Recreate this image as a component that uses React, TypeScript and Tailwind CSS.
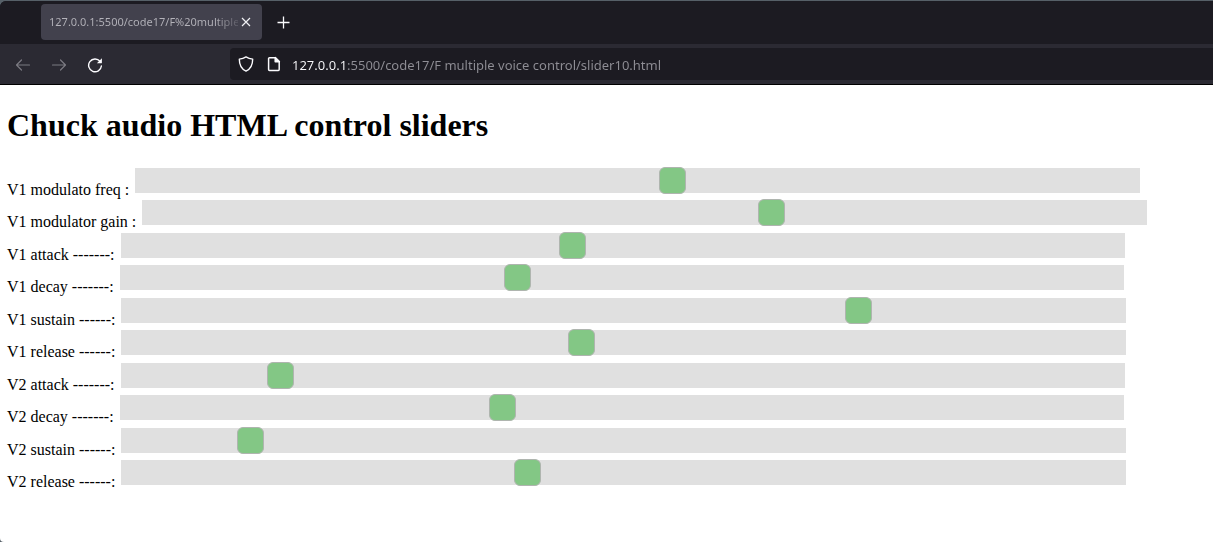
import { useState } from "react";

const sliders = [
  { id: "v1-mod-freq", label: "V1 modulato freq :", value: 536 },
  { id: "v1-mod-gain", label: "V1 modulator gain :", value: 630 },
  { id: "v1-attack", label: "V1 attack -------:", value: 449 },
  { id: "v1-decay", label: "V1 decay -------:", value: 393 },
  { id: "v1-sustain", label: "V1 sustain ------:", value: 740 },
  { id: "v1-release", label: "V1 release ------:", value: 457 },
  { id: "v2-attack", label: "V2 attack -------:", value: 150 },
  { id: "v2-decay", label: "V2 decay -------:", value: 378 },
  { id: "v2-sustain", label: "V2 sustain ------:", value: 118 },
  { id: "v2-release", label: "V2 release ------:", value: 402 },
];

function VoiceSlider({ id, label, initial }: { id: string; label: string; initial: number }) {
  const [value, setValue] = useState(initial);
  return (
    <div className="flex items-start gap-1.5 odd:h-8 even:h-[33px]">
      <label htmlFor={id} className="shrink-0 pt-3 text-base leading-5 text-black">
        {label}
      </label>
      <input
        id={id}
        type="range"
        min={0}
        max={1000}
        value={value}
        onChange={(e) => setValue(Number(e.target.value))}
        className="h-[25px] w-[84%] appearance-none bg-[#e0e0e0] outline-none [&::-webkit-slider-thumb]:h-[27px] [&::-webkit-slider-thumb]:w-[27px] [&::-webkit-slider-thumb]:cursor-pointer [&::-webkit-slider-thumb]:appearance-none [&::-webkit-slider-thumb]:rounded-md [&::-webkit-slider-thumb]:border [&::-webkit-slider-thumb]:border-solid [&::-webkit-slider-thumb]:border-[#afb5af] [&::-webkit-slider-thumb]:bg-[#83c785]"
      />
    </div>
  );
}

function TabStrip() {
  return (
    <div className="flex h-[43px] items-start bg-[#1c1b22] pt-[3px] pl-[41px]">
      <div className="flex h-9 w-[221px] items-center rounded bg-[#42414d] pr-2 pl-2">
        <span className="min-w-0 flex-1 bg-linear-to-r from-[#b4b3ba] from-88% to-[#5a5964] bg-clip-text text-[11px] leading-5 whitespace-nowrap text-transparent">
          127.0.0.1:5500/code17/F%20multiple
        </span>
        <button type="button" aria-label="Close tab" className="flex h-4 w-4 items-center justify-center">
          <svg width="10" height="10" viewBox="0 0 10 10" fill="none" stroke="#f0f0f4" strokeWidth="1.2">
            <path d="M1 1l8 8M9 1L1 9" />
          </svg>
        </button>
      </div>
      <button type="button" aria-label="New tab" className="ml-3 flex h-9 w-[19px] items-center justify-center">
        <svg width="13" height="13" viewBox="0 0 13 13" fill="none" stroke="#fbfbfe" strokeWidth="1.3">
          <path d="M6.5 .5v12M.5 6.5h12" />
        </svg>
      </button>
    </div>
  );
}

function Toolbar() {
  return (
    <div className="flex h-10 items-center bg-[#2b2a33] pl-[15px]">
      <div className="flex w-[215px] shrink-0 items-center gap-5 pt-px">
        <button type="button" aria-label="Back" className="h-4 w-4">
          <svg width="16" height="16" viewBox="0 0 16 16" fill="none" stroke="#7b7a82" strokeWidth="1.2" strokeLinecap="round" strokeLinejoin="round">
            <path d="M14.5 8H1.5M6.5 3l-5 5 5 5" />
          </svg>
        </button>
        <button type="button" aria-label="Forward" className="h-4 w-4">
          <svg width="16" height="16" viewBox="0 0 16 16" fill="none" stroke="#7b7a82" strokeWidth="1.2" strokeLinecap="round" strokeLinejoin="round">
            <path d="M1.5 8h13M9.5 3l5 5-5 5" />
          </svg>
        </button>
        <button type="button" aria-label="Reload" className="h-4 w-4">
          <svg width="16" height="16" viewBox="0 0 16 16" fill="none" stroke="#fbfbfe" strokeWidth="1.4" strokeLinecap="round">
            <path d="M13 4.3A6.4 6.4 0 1 0 14.4 9" />
            <path d="M14.9 1.2v4.6a.4.4 0 0 1-.4.4H9.9z" fill="#fbfbfe" stroke="none" />
          </svg>
        </button>
      </div>
      <div className="flex h-8 flex-1 items-center rounded-l bg-[#1c1b22] pl-2">
        <svg className="shrink-0" width="16" height="16" viewBox="0 0 16 16" fill="none" stroke="#fbfbfe" strokeWidth="1.4" strokeLinejoin="round">
          <path d="M8 .9C6 2.2 3.6 2.9 1.3 3.1c0 5.600 1.600 9.900 6.700 12 5.100-2.100 6.700-6.400 6.700-12C12.400 2.900 10 2.200 8 .9z" />
        </svg>
        <svg className="ml-3 shrink-0" width="16" height="16" viewBox="0 0 16 16" fill="none" stroke="#fbfbfe" strokeWidth="1.5" strokeLinejoin="round">
          <path d="M3.500 1.700h5.800l3.900 3.900v7.900a.9.9 0 0 1-.9.9H3.500a.9.9 0 0 1-.9-.9V2.600a.9.9 0 0 1 .9-.9z" />
          <path d="M9.200 1.500v4.200h4.200z" fill="#fbfbfe" />
        </svg>
        <input
          type="text"
          aria-label="Address"
          defaultValue="127.0.0.1:5500/code17/F multiple voice control/slider10.html"
          className="ml-2.5 h-6 min-w-0 flex-1 bg-[linear-gradient(to_right,#fbfbfe_56px,#8f8e95_56px)] bg-clip-text pt-px text-[13px] text-transparent caret-white outline-none"
        />
      </div>
    </div>
  );
}

export default function App() {
  return (
    <div className="min-h-screen bg-[#566068]">
      <div className="flex min-h-screen flex-col pt-px">
        <header className="overflow-hidden rounded-tl-md border-b border-black bg-[#1c1b22] font-['Noto_Sans',sans-serif]">
          <TabStrip />
          <Toolbar />
        </header>
        <main className="flex-1 rounded-bl bg-white pt-[22px] pr-2.5 pl-[7px] font-['Liberation_Serif',serif]">
          <h1 className="text-[32px] leading-9 font-bold text-black">Chuck audio HTML control sliders</h1>
          <div className="mt-[25px]">
            {sliders.map((s) => (
              <VoiceSlider key={s.id} id={s.id} label={s.label} initial={s.value} />
            ))}
          </div>
        </main>
      </div>
    </div>
  );
}
